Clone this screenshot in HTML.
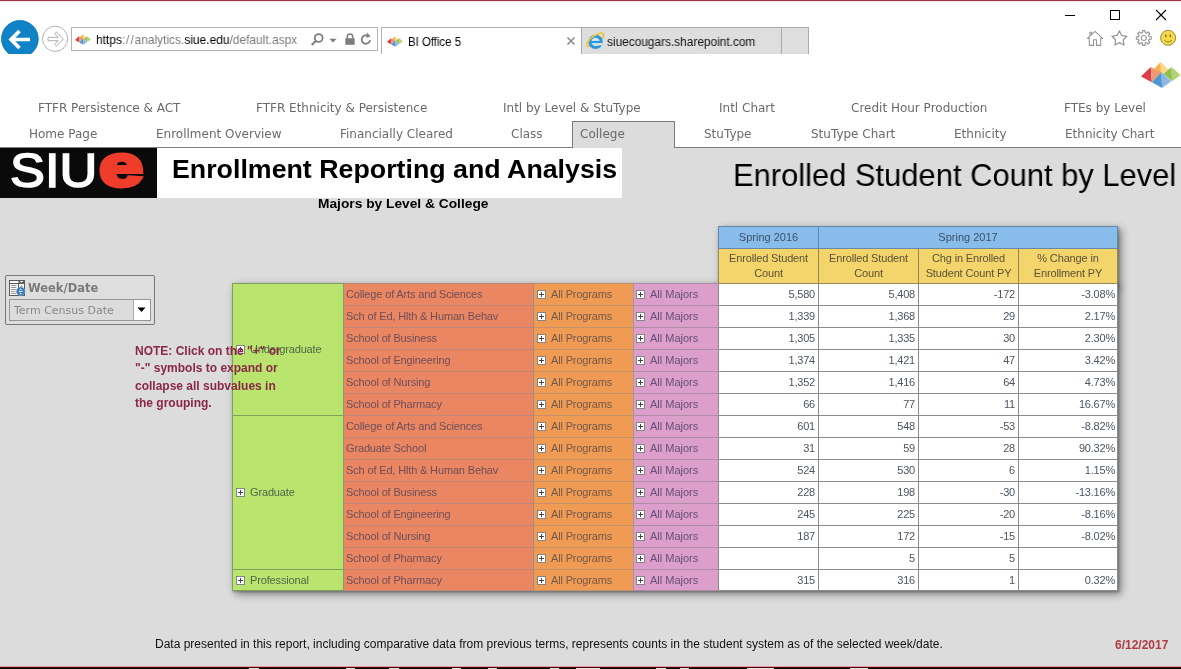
<!DOCTYPE html>
<html><head><meta charset="utf-8"><title>BI Office 5</title>
<style>
html,body{margin:0;padding:0;}
body{width:1181px;height:669px;position:relative;overflow:hidden;background:#fff;font-family:"Liberation Sans",sans-serif;}
.a{position:absolute;}
.t,.nav,.cell{will-change:transform;}
.t{position:absolute;white-space:nowrap;transform-origin:0 50%;line-height:1;}
.nav{position:absolute;white-space:nowrap;font-family:"DejaVu Sans","Liberation Sans",sans-serif;font-size:12px;color:#6a6a6a;line-height:14px;}
.r1{top:101px;} .r2{top:127px;}
#grey{left:0;top:148px;width:1181px;height:521px;background:#dcdcdc;}
.cell{position:absolute;box-sizing:border-box;font-size:11px;line-height:20px;white-space:nowrap;color:#4b5563;overflow:hidden;}
.num{text-align:right;padding-right:3px;background:#fff;letter-spacing:-.2px;}
.col{background:#ea8662;padding-left:2px;color:#6e4f59;letter-spacing:-.15px;}
.prg{background:#f09b54;color:#73594a;letter-spacing:-.15px;}
.maj{background:#dc9ecb;color:#645078;}
.maj .pl{left:2px;}
.lvl{background:#b9e46e;color:#4d6848;letter-spacing:-.15px;}
.pl{position:absolute;left:3px;top:6px;width:9px;height:9px;border:1px solid #858585;background:#fff;box-sizing:border-box;}
.pl:before{content:"";position:absolute;left:1px;top:3px;width:5px;height:1px;background:#444;}
.pl:after{content:"";position:absolute;left:3px;top:1px;width:1px;height:5px;background:#444;}
.hb{background:#88bcea;color:#3d5068;text-align:center;}
.hy{background:#f4d56b;color:#5a5238;text-align:center;line-height:15px;padding-top:2px;letter-spacing:-.15px;}
</style></head><body>
<!-- window top border -->
<div class="a" style="left:0;top:0;width:1181px;height:1px;background:#9c323b;"></div>
<div class="a" style="left:0;top:1px;width:1181px;height:1px;background:#fbe9ec;"></div>
<!-- window controls -->
<svg class="a" style="left:1060px;top:5px" width="115" height="20" viewBox="0 0 115 20">
 <path d="M5 10.5H15" stroke="#000" stroke-width="1" fill="none"/>
 <rect x="50.5" y="5.5" width="9" height="9" stroke="#000" stroke-width="1" fill="none"/>
 <path d="M96 5L106 15M106 5L96 15" stroke="#000" stroke-width="1.1" fill="none"/>
</svg>
<!-- back button -->
<div class="a" style="left:0;top:20px;width:42px;height:34px;overflow:hidden;">
 <svg width="42" height="40" viewBox="0 0 42 40">
  <circle cx="19.900" cy="18.900" r="18.600" fill="#1083c6"/>
  <circle cx="19.900" cy="18.900" r="18.200" fill="none" stroke="#0f78ba" stroke-width=".800"/>
  <path d="M30 19.5H11.5M19.5 11L11 19.5L19.5 28" stroke="#fff" stroke-width="3.6" fill="none" stroke-linecap="butt" stroke-linejoin="miter"/>
 </svg>
</div>
<!-- forward button -->
<svg class="a" style="left:41px;top:25px" width="28" height="28" viewBox="0 0 28 28">
 <circle cx="14.100" cy="13.800" r="12.600" fill="#fff" stroke="#b4b4b4" stroke-width="1"/>
 <path d="M7 12.400H17.200L13.600 8.700L15.500 7L22.200 14.050L15.500 21.100L13.600 19.400L17.200 15.700H7Z" fill="#fff" stroke="#b0b0b0" stroke-width="1" stroke-linejoin="miter"/>
</svg>
<!-- address bar -->
<div class="a" style="left:71px;top:27px;width:307px;height:24px;box-sizing:border-box;border:1px solid #b4b4b4;background:#fff;"></div>
<svg class="a" style="left:75px;top:34px" width="16" height="11" viewBox="0 0 40 26">
 <polygon points="19.700,0 10.500,9.500 20,15" fill="#fcb04a"/>
 <polygon points="19.700,0 20,15 29.500,9.500" fill="#fdd68a"/>
 <polygon points="9.700,5 0,14.500 10.900,20.200" fill="#dd3d49"/>
 <polygon points="9.700,5 10.900,20.200 20.500,10.800" fill="#ec9a72"/>
 <polygon points="30.600,5.100 22.500,12 31,19.200" fill="#8cc04f"/>
 <polygon points="30.600,5.100 31,19.200 39.500,13.300" fill="#b2d374"/>
 <polygon points="20.500,10.300 10.900,20.200 21.100,25.900" fill="#4a97d2"/>
 <polygon points="20.500,10.300 21.100,25.900 30.300,19.300" fill="#8db6e2"/>
</svg>
<div class="t" style="left:96px;top:33px;font-size:13px;color:#7c7c7c;transform:scaleX(.918);"><span style="color:#000">https</span><span style="letter-spacing:1px">://</span>analytics.<span style="color:#000">siue.edu</span>/default.aspx</div>
<!-- address icons -->
<svg class="a" style="left:309px;top:31px" width="68" height="18" viewBox="0 0 68 18">
 <circle cx="9.700" cy="7" r="3.900" fill="none" stroke="#7e7e7e" stroke-width="1.800"/>
 <path d="M7 9.800L2.700 14" stroke="#7e7e7e" stroke-width="2.100" fill="none"/>
 <path d="M20.300 7.800H27.700L24 11.500Z" fill="#7e7e7e"/>
 <rect x="36.300" y="7.200" width="9.400" height="6.600" fill="#7e7e7e"/>
 <path d="M38.300 7.500V5.700A2.700 2.700 0 0 1 43.700 5.700V7.500" fill="none" stroke="#7e7e7e" stroke-width="1.500"/>
 <path d="M59.600 5.300A4.200 4.200 0 1 0 61.100 9.100" fill="none" stroke="#7e7e7e" stroke-width="1.800"/>
 <path d="M58 1.600L61.600 5.500L57.200 6.800Z" fill="#7e7e7e"/>
</svg>
<!-- tabs -->
<div class="a" style="left:381px;top:27px;width:201px;height:27px;box-sizing:border-box;border:1px solid #b0b0b0;border-bottom:none;background:#fff;"></div>
<div class="a" style="left:581px;top:27px;width:201px;height:27px;box-sizing:border-box;border:1px solid #aaa;border-bottom:none;background:#dedede;"></div>
<div class="a" style="left:781px;top:27px;width:28px;height:27px;box-sizing:border-box;border:1px solid #aaa;border-bottom:none;background:#dedede;"></div>
<svg class="a" style="left:387px;top:36px" width="16" height="11" viewBox="0 0 40 26">
 <polygon points="19.700,0 10.500,9.500 20,15" fill="#fcb04a"/>
 <polygon points="19.700,0 20,15 29.500,9.500" fill="#fdd68a"/>
 <polygon points="9.700,5 0,14.500 10.900,20.200" fill="#dd3d49"/>
 <polygon points="9.700,5 10.900,20.200 20.500,10.800" fill="#ec9a72"/>
 <polygon points="30.600,5.100 22.500,12 31,19.200" fill="#8cc04f"/>
 <polygon points="30.600,5.100 31,19.200 39.500,13.300" fill="#b2d374"/>
 <polygon points="20.500,10.300 10.900,20.200 21.100,25.900" fill="#4a97d2"/>
 <polygon points="20.500,10.300 21.100,25.900 30.300,19.300" fill="#8db6e2"/>
</svg>
<div class="t" style="left:408px;top:36px;font-size:12px;color:#000;transform:scaleX(.95);">BI Office 5</div>
<svg class="a" style="left:566px;top:36px" width="10" height="10" viewBox="0 0 10 10"><path d="M1.500 1.500L8.500 8.500M8.500 1.500L1.500 8.500" stroke="#8a8a8a" stroke-width="1.600" fill="none"/></svg>
<!-- IE icon -->
<svg class="a" style="left:584px;top:30px" width="22" height="22" viewBox="0 0 22 22">
 <g transform="translate(11.200 9.800) rotate(-36)"><path d="M-10 0A10 3.800 0 0 0 10 0" fill="none" stroke="#f0b92e" stroke-width="1.500"/></g>
 <circle cx="11.600" cy="11.900" r="5.700" fill="#d4ecf8" stroke="#2b97dc" stroke-width="3"/>
 <rect x="7" y="10.900" width="11" height="2.200" fill="#2b97dc"/>
 <path d="M12.500 13.100H19.500V15.300L17 15.600H12.500Z" fill="#dedede"/>
 <g transform="translate(11.200 9.800) rotate(-36)"><path d="M-10 0A10 3.800 0 0 1 10 0" fill="none" stroke="#f3c437" stroke-width="1.600"/></g>
</svg>
<div class="t" style="left:607px;top:36px;font-size:12px;color:#111;transform:scaleX(.988);">siuecougars.sharepoint.com</div>
<!-- toolbar icons -->
<svg class="a" style="left:1085px;top:28px" width="96" height="20" viewBox="0 0 96 20">
 <path d="M10 3.300L2.400 10.400H4.300V17.400H8.500V11.800H11.500V17.400H15.700V10.400H17.600ZM5 7.900V4.300H6.600V6.400" fill="#fff" stroke="#989898" stroke-width="1.100" stroke-linejoin="round"/>
 <path d="M34.40 2.90L36.75 7.46L41.82 8.29L38.20 11.94L38.98 17.01L34.40 14.70L29.82 17.01L30.60 11.94L26.98 8.29L32.05 7.46Z" fill="#fff" stroke="#989898" stroke-width="1.300" stroke-linejoin="round"/>
 <path d="M57.40 4.73L57.63 2.54L59.97 2.54L60.20 4.73L61.50 5.27L63.21 3.88L64.87 5.54L63.48 7.25L64.02 8.55L66.21 8.78L66.21 11.12L64.02 11.35L63.48 12.65L64.87 14.36L63.21 16.02L61.50 14.63L60.20 15.17L59.97 17.36L57.63 17.36L57.40 15.17L56.10 14.63L54.39 16.02L52.73 14.36L54.12 12.65L53.58 11.35L51.39 11.12L51.39 8.78L53.58 8.55L54.12 7.25L52.73 5.54L54.39 3.88L56.10 5.27Z" fill="#fff" stroke="#989898" stroke-width="1.200" stroke-linejoin="round"/>
 <circle cx="58.800" cy="9.950" r="2.500" fill="#fff" stroke="#989898" stroke-width="1.100"/>
 <circle cx="83.100" cy="9.800" r="7.500" fill="#f7d94c" stroke="#9a8a3c" stroke-width="1"/>
 <ellipse cx="80.800" cy="7.800" rx=".800" ry="1.600" fill="#7d6a1c"/>
 <ellipse cx="85.300" cy="7.800" rx=".800" ry="1.600" fill="#7d6a1c"/>
 <path d="M79.400 12.300Q83.100 15.600 86.800 12.300" fill="none" stroke="#8a7424" stroke-width=".900"/>
</svg>
<!-- pyramid logo -->
<svg class="a" style="left:1141px;top:62px" width="40" height="26" viewBox="0 0 40 26">
 <polygon points="19.700,0 10.500,9.500 20,15" fill="#fcb04a"/>
 <polygon points="19.700,0 20,15 29.500,9.500" fill="#fdd68a"/>
 <polygon points="9.700,5 0,14.500 10.900,20.200" fill="#dd3d49"/>
 <polygon points="9.700,5 10.900,20.200 20.500,10.800" fill="#ec9a72"/>
 <polygon points="30.600,5.100 22.500,12 31,19.200" fill="#8cc04f"/>
 <polygon points="30.600,5.100 31,19.200 39.500,13.300" fill="#b2d374"/>
 <polygon points="20.500,10.300 10.900,20.200 21.100,25.900" fill="#4a97d2"/>
 <polygon points="20.500,10.300 21.100,25.900 30.300,19.300" fill="#8db6e2"/>
</svg>
<!-- nav -->
<div class="nav r1" style="left:38px">FTFR Persistence &amp; ACT</div>
<div class="nav r1" style="left:256px">FTFR Ethnicity &amp; Persistence</div>
<div class="nav r1" style="left:503px">Intl by Level &amp; StuType</div>
<div class="nav r1" style="left:719px">Intl Chart</div>
<div class="nav r1" style="left:851px">Credit Hour Production</div>
<div class="nav r1" style="left:1064px">FTEs by Level</div>
<div class="a" style="left:0;top:147px;width:1181px;height:1px;background:#7d7d7d;"></div>
<div class="a" id="grey"></div>
<div class="a" style="left:572px;top:121px;width:103px;height:27px;box-sizing:border-box;border:1px solid #7a7a7a;border-bottom:none;background:#dcdcdc;"></div>
<div class="nav r2" style="left:29px">Home Page</div>
<div class="nav r2" style="left:156px">Enrollment Overview</div>
<div class="nav r2" style="left:340px">Financially Cleared</div>
<div class="nav r2" style="left:511px">Class</div>
<div class="nav r2" style="left:580px">College</div>
<div class="nav r2" style="left:704px">StuType</div>
<div class="nav r2" style="left:811px">StuType Chart</div>
<div class="nav r2" style="left:954px">Ethnicity</div>
<div class="nav r2" style="left:1065px">Ethnicity Chart</div>
<!-- banner -->
<div class="a" style="left:0;top:148px;width:157px;height:50px;background:#0a0a0a;"></div>
<div class="a" style="left:157px;top:148px;width:465px;height:50px;background:#fff;"></div>
<div class="t" style="left:10px;top:147px;font-size:48px;color:#fff;transform:scaleX(1.090);-webkit-text-stroke:1.600px #fff;">SIU</div>
<div class="t" style="left:99px;top:137px;font-size:59px;font-weight:bold;color:#ee3d2a;transform:scaleX(1.350);-webkit-text-stroke:4px #ee3d2a;">e</div>
<div class="t" style="left:172px;top:156px;font-size:26.500px;font-weight:bold;color:#000;transform:scaleX(1.010);">Enrollment Reporting and Analysis</div>
<div class="t" style="left:318px;top:197px;font-size:13px;font-weight:bold;color:#000;transform:scaleX(1.058);">Majors by Level &amp; College</div>
<div class="t" style="left:733px;top:160px;font-size:31.500px;color:#000;transform:scaleX(.981);">Enrolled Student Count by Level</div>
<!-- slicer -->
<div class="a" style="left:5px;top:275px;width:150px;height:50px;box-sizing:border-box;border:1px solid #787878;border-radius:2px;background:#dedede;"></div>
<svg class="a" style="left:9px;top:280px" width="18" height="18" viewBox="0 0 18 18">
 <rect x=".5" y=".5" width="15" height="15" fill="#fff" stroke="#5a5a5a" stroke-width="1"/>
 <path d="M0 3.500H16" stroke="#5a5a5a" stroke-width="1"/>
 <rect x="9.500" y="0" width="6.500" height="3.500" fill="#5a5a5a"/>
 <path d="M10.800 1L14.400 1L12.600 2.800Z" fill="#fff"/>
 <path d="M9.500 3V12" stroke="#5a5a5a" stroke-width="1"/>
 <path d="M2 5.500H7.500M2 7.500H7.500M2 9.500H7M2 11.500H6.500M2 13.500H7" stroke="#8a8a8a" stroke-width=".900"/>
 <path d="M11.300 6.500L12.500 5L13.700 6.500Z" fill="#5a5a5a"/>
 <circle cx="11.700" cy="11.400" r="4.300" fill="#3f7dbd" stroke="#7aa7d6" stroke-width=".600"/>
 <path d="M10 11.400H13.400" stroke="#e8f3fc" stroke-width="1.100"/>
 <path d="M10.500 9.700L11.700 8.200L12.900 9.700ZM10.500 13.100L11.700 14.600L12.900 13.100Z" fill="#d9ecfa"/>
</svg>
<div class="t" style="left:28px;top:283px;font-family:'DejaVu Sans','Liberation Sans',sans-serif;font-size:11.500px;font-weight:bold;color:#7a7a7a;">Week/Date</div>
<div class="a" style="left:9px;top:299px;width:142px;height:22px;box-sizing:border-box;border:1px solid #969696;background:#dcdcdc;"></div>
<div class="a" style="left:133px;top:300px;width:17px;height:20px;background:#fff;border-left:1px solid #aaa;box-sizing:border-box;"></div>
<svg class="a" style="left:137px;top:307px" width="9" height="6" viewBox="0 0 9 6"><path d="M.5 .5H8.500L4.500 5Z" fill="#000"/></svg>
<div class="t" style="left:14px;top:305px;font-family:'DejaVu Sans','Liberation Sans',sans-serif;font-size:11px;color:#888;">Term Census Date</div>
<div class="a" style="left:232px;top:283px;width:886px;height:308px;background:#999;box-shadow:3px 3px 8px rgba(0,0,0,.45),1px 1px 2px rgba(0,0,0,.25);"></div>
<div class="a" style="left:718px;top:226px;width:400px;height:60px;background:#999;box-shadow:3px 3px 8px rgba(0,0,0,.45),1px 1px 2px rgba(0,0,0,.25);"></div>
<div class="a" style="left:232px;top:283px;width:886px;height:308px;background:#999;"></div>
<div class="cell hb" style="left:718px;top:226px;width:101px;height:23px;border-right:1px solid #6988a8;border-bottom:1px solid #6988a8;border-left:1px solid #6988a8;border-top:1px solid #6988a8;line-height:20px;">Spring 2016</div>
<div class="cell hb" style="left:819px;top:226px;width:299px;height:23px;border-right:1px solid #6988a8;border-bottom:1px solid #6988a8;border-top:1px solid #6988a8;line-height:20px;">Spring 2017</div>
<div class="cell hy" style="left:718px;top:249px;width:101px;height:35px;border-right:1px solid #94895a;border-bottom:1px solid #94895a;border-left:1px solid #94895a;">Enrolled Student<br>Count</div>
<div class="cell hy" style="left:819px;top:249px;width:100px;height:35px;border-right:1px solid #94895a;border-bottom:1px solid #94895a;">Enrolled Student<br>Count</div>
<div class="cell hy" style="left:919px;top:249px;width:100px;height:35px;border-right:1px solid #94895a;border-bottom:1px solid #94895a;">Chg in Enrolled<br>Student Count PY</div>
<div class="cell hy" style="left:1019px;top:249px;width:99px;height:35px;border-right:1px solid #94895a;border-bottom:1px solid #94895a;">% Change in<br>Enrollment PY</div>
<div class="cell lvl" style="left:232px;top:283px;width:112px;height:133px;border-right:1px solid #8a9a68;border-bottom:1px solid #82a05a;border-left:1px solid #82a05a;border-top:1px solid #82a05a;line-height:130px;padding-left:17px;"><i class="pl" style="top:61px"></i>Undergraduate</div>
<div class="cell lvl" style="left:232px;top:416px;width:112px;height:154px;border-right:1px solid #8a9a68;border-bottom:1px solid #82a05a;border-left:1px solid #82a05a;line-height:152px;padding-left:17px;"><i class="pl" style="top:72px"></i>Graduate</div>
<div class="cell lvl" style="left:232px;top:570px;width:112px;height:21px;border-right:1px solid #8a9a68;border-bottom:1px solid #82a05a;border-left:1px solid #82a05a;line-height:20px;padding-left:17px;"><i class="pl" style="top:6px"></i>Professional</div>
<div class="cell col" style="left:344px;top:283px;width:190px;height:23px;border-right:1px solid #a48c86;border-bottom:1px solid #bd8876;border-top:1px solid #bd8876;">College of Arts and Sciences</div>
<div class="cell prg" style="left:534px;top:283px;width:100px;height:23px;border-right:1px solid #a4989a;border-bottom:1px solid #c4926a;border-top:1px solid #c4926a;padding-left:17px;"><i class="pl"></i>All Programs</div>
<div class="cell maj" style="left:634px;top:283px;width:85px;height:23px;border-right:1px solid #8c8c8c;border-bottom:1px solid #ad8ca6;border-top:1px solid #ad8ca6;padding-left:16px;"><i class="pl"></i>All Majors</div>
<div class="cell num" style="left:719px;top:284px;width:100px;height:22px;border-right:1px solid #8c8c8c;border-bottom:1px solid #8c8c8c;">5,580</div>
<div class="cell num" style="left:819px;top:284px;width:100px;height:22px;border-right:1px solid #8c8c8c;border-bottom:1px solid #8c8c8c;">5,408</div>
<div class="cell num" style="left:919px;top:284px;width:100px;height:22px;border-right:1px solid #8c8c8c;border-bottom:1px solid #8c8c8c;">-172</div>
<div class="cell num" style="left:1019px;top:284px;width:99px;height:22px;border-right:1px solid #8c8c8c;border-bottom:1px solid #8c8c8c;padding-right:2px;">-3.08%</div>
<div class="cell col" style="left:344px;top:306px;width:190px;height:22px;border-right:1px solid #a48c86;border-bottom:1px solid #bd8876;">Sch of Ed, Hlth &amp; Human Behav</div>
<div class="cell prg" style="left:534px;top:306px;width:100px;height:22px;border-right:1px solid #a4989a;border-bottom:1px solid #c4926a;padding-left:17px;"><i class="pl"></i>All Programs</div>
<div class="cell maj" style="left:634px;top:306px;width:85px;height:22px;border-right:1px solid #8c8c8c;border-bottom:1px solid #ad8ca6;padding-left:16px;"><i class="pl"></i>All Majors</div>
<div class="cell num" style="left:719px;top:306px;width:100px;height:22px;border-right:1px solid #8c8c8c;border-bottom:1px solid #8c8c8c;">1,339</div>
<div class="cell num" style="left:819px;top:306px;width:100px;height:22px;border-right:1px solid #8c8c8c;border-bottom:1px solid #8c8c8c;">1,368</div>
<div class="cell num" style="left:919px;top:306px;width:100px;height:22px;border-right:1px solid #8c8c8c;border-bottom:1px solid #8c8c8c;">29</div>
<div class="cell num" style="left:1019px;top:306px;width:99px;height:22px;border-right:1px solid #8c8c8c;border-bottom:1px solid #8c8c8c;padding-right:2px;">2.17%</div>
<div class="cell col" style="left:344px;top:328px;width:190px;height:22px;border-right:1px solid #a48c86;border-bottom:1px solid #bd8876;">School of Business</div>
<div class="cell prg" style="left:534px;top:328px;width:100px;height:22px;border-right:1px solid #a4989a;border-bottom:1px solid #c4926a;padding-left:17px;"><i class="pl"></i>All Programs</div>
<div class="cell maj" style="left:634px;top:328px;width:85px;height:22px;border-right:1px solid #8c8c8c;border-bottom:1px solid #ad8ca6;padding-left:16px;"><i class="pl"></i>All Majors</div>
<div class="cell num" style="left:719px;top:328px;width:100px;height:22px;border-right:1px solid #8c8c8c;border-bottom:1px solid #8c8c8c;">1,305</div>
<div class="cell num" style="left:819px;top:328px;width:100px;height:22px;border-right:1px solid #8c8c8c;border-bottom:1px solid #8c8c8c;">1,335</div>
<div class="cell num" style="left:919px;top:328px;width:100px;height:22px;border-right:1px solid #8c8c8c;border-bottom:1px solid #8c8c8c;">30</div>
<div class="cell num" style="left:1019px;top:328px;width:99px;height:22px;border-right:1px solid #8c8c8c;border-bottom:1px solid #8c8c8c;padding-right:2px;">2.30%</div>
<div class="cell col" style="left:344px;top:350px;width:190px;height:22px;border-right:1px solid #a48c86;border-bottom:1px solid #bd8876;">School of Engineering</div>
<div class="cell prg" style="left:534px;top:350px;width:100px;height:22px;border-right:1px solid #a4989a;border-bottom:1px solid #c4926a;padding-left:17px;"><i class="pl"></i>All Programs</div>
<div class="cell maj" style="left:634px;top:350px;width:85px;height:22px;border-right:1px solid #8c8c8c;border-bottom:1px solid #ad8ca6;padding-left:16px;"><i class="pl"></i>All Majors</div>
<div class="cell num" style="left:719px;top:350px;width:100px;height:22px;border-right:1px solid #8c8c8c;border-bottom:1px solid #8c8c8c;">1,374</div>
<div class="cell num" style="left:819px;top:350px;width:100px;height:22px;border-right:1px solid #8c8c8c;border-bottom:1px solid #8c8c8c;">1,421</div>
<div class="cell num" style="left:919px;top:350px;width:100px;height:22px;border-right:1px solid #8c8c8c;border-bottom:1px solid #8c8c8c;">47</div>
<div class="cell num" style="left:1019px;top:350px;width:99px;height:22px;border-right:1px solid #8c8c8c;border-bottom:1px solid #8c8c8c;padding-right:2px;">3.42%</div>
<div class="cell col" style="left:344px;top:372px;width:190px;height:22px;border-right:1px solid #a48c86;border-bottom:1px solid #bd8876;">School of Nursing</div>
<div class="cell prg" style="left:534px;top:372px;width:100px;height:22px;border-right:1px solid #a4989a;border-bottom:1px solid #c4926a;padding-left:17px;"><i class="pl"></i>All Programs</div>
<div class="cell maj" style="left:634px;top:372px;width:85px;height:22px;border-right:1px solid #8c8c8c;border-bottom:1px solid #ad8ca6;padding-left:16px;"><i class="pl"></i>All Majors</div>
<div class="cell num" style="left:719px;top:372px;width:100px;height:22px;border-right:1px solid #8c8c8c;border-bottom:1px solid #8c8c8c;">1,352</div>
<div class="cell num" style="left:819px;top:372px;width:100px;height:22px;border-right:1px solid #8c8c8c;border-bottom:1px solid #8c8c8c;">1,416</div>
<div class="cell num" style="left:919px;top:372px;width:100px;height:22px;border-right:1px solid #8c8c8c;border-bottom:1px solid #8c8c8c;">64</div>
<div class="cell num" style="left:1019px;top:372px;width:99px;height:22px;border-right:1px solid #8c8c8c;border-bottom:1px solid #8c8c8c;padding-right:2px;">4.73%</div>
<div class="cell col" style="left:344px;top:394px;width:190px;height:22px;border-right:1px solid #a48c86;border-bottom:1px solid #bd8876;">School of Pharmacy</div>
<div class="cell prg" style="left:534px;top:394px;width:100px;height:22px;border-right:1px solid #a4989a;border-bottom:1px solid #c4926a;padding-left:17px;"><i class="pl"></i>All Programs</div>
<div class="cell maj" style="left:634px;top:394px;width:85px;height:22px;border-right:1px solid #8c8c8c;border-bottom:1px solid #ad8ca6;padding-left:16px;"><i class="pl"></i>All Majors</div>
<div class="cell num" style="left:719px;top:394px;width:100px;height:22px;border-right:1px solid #8c8c8c;border-bottom:1px solid #8c8c8c;">66</div>
<div class="cell num" style="left:819px;top:394px;width:100px;height:22px;border-right:1px solid #8c8c8c;border-bottom:1px solid #8c8c8c;">77</div>
<div class="cell num" style="left:919px;top:394px;width:100px;height:22px;border-right:1px solid #8c8c8c;border-bottom:1px solid #8c8c8c;">11</div>
<div class="cell num" style="left:1019px;top:394px;width:99px;height:22px;border-right:1px solid #8c8c8c;border-bottom:1px solid #8c8c8c;padding-right:2px;">16.67%</div>
<div class="cell col" style="left:344px;top:416px;width:190px;height:22px;border-right:1px solid #a48c86;border-bottom:1px solid #bd8876;">College of Arts and Sciences</div>
<div class="cell prg" style="left:534px;top:416px;width:100px;height:22px;border-right:1px solid #a4989a;border-bottom:1px solid #c4926a;padding-left:17px;"><i class="pl"></i>All Programs</div>
<div class="cell maj" style="left:634px;top:416px;width:85px;height:22px;border-right:1px solid #8c8c8c;border-bottom:1px solid #ad8ca6;padding-left:16px;"><i class="pl"></i>All Majors</div>
<div class="cell num" style="left:719px;top:416px;width:100px;height:22px;border-right:1px solid #8c8c8c;border-bottom:1px solid #8c8c8c;">601</div>
<div class="cell num" style="left:819px;top:416px;width:100px;height:22px;border-right:1px solid #8c8c8c;border-bottom:1px solid #8c8c8c;">548</div>
<div class="cell num" style="left:919px;top:416px;width:100px;height:22px;border-right:1px solid #8c8c8c;border-bottom:1px solid #8c8c8c;">-53</div>
<div class="cell num" style="left:1019px;top:416px;width:99px;height:22px;border-right:1px solid #8c8c8c;border-bottom:1px solid #8c8c8c;padding-right:2px;">-8.82%</div>
<div class="cell col" style="left:344px;top:438px;width:190px;height:22px;border-right:1px solid #a48c86;border-bottom:1px solid #bd8876;">Graduate School</div>
<div class="cell prg" style="left:534px;top:438px;width:100px;height:22px;border-right:1px solid #a4989a;border-bottom:1px solid #c4926a;padding-left:17px;"><i class="pl"></i>All Programs</div>
<div class="cell maj" style="left:634px;top:438px;width:85px;height:22px;border-right:1px solid #8c8c8c;border-bottom:1px solid #ad8ca6;padding-left:16px;"><i class="pl"></i>All Majors</div>
<div class="cell num" style="left:719px;top:438px;width:100px;height:22px;border-right:1px solid #8c8c8c;border-bottom:1px solid #8c8c8c;">31</div>
<div class="cell num" style="left:819px;top:438px;width:100px;height:22px;border-right:1px solid #8c8c8c;border-bottom:1px solid #8c8c8c;">59</div>
<div class="cell num" style="left:919px;top:438px;width:100px;height:22px;border-right:1px solid #8c8c8c;border-bottom:1px solid #8c8c8c;">28</div>
<div class="cell num" style="left:1019px;top:438px;width:99px;height:22px;border-right:1px solid #8c8c8c;border-bottom:1px solid #8c8c8c;padding-right:2px;">90.32%</div>
<div class="cell col" style="left:344px;top:460px;width:190px;height:22px;border-right:1px solid #a48c86;border-bottom:1px solid #bd8876;">Sch of Ed, Hlth &amp; Human Behav</div>
<div class="cell prg" style="left:534px;top:460px;width:100px;height:22px;border-right:1px solid #a4989a;border-bottom:1px solid #c4926a;padding-left:17px;"><i class="pl"></i>All Programs</div>
<div class="cell maj" style="left:634px;top:460px;width:85px;height:22px;border-right:1px solid #8c8c8c;border-bottom:1px solid #ad8ca6;padding-left:16px;"><i class="pl"></i>All Majors</div>
<div class="cell num" style="left:719px;top:460px;width:100px;height:22px;border-right:1px solid #8c8c8c;border-bottom:1px solid #8c8c8c;">524</div>
<div class="cell num" style="left:819px;top:460px;width:100px;height:22px;border-right:1px solid #8c8c8c;border-bottom:1px solid #8c8c8c;">530</div>
<div class="cell num" style="left:919px;top:460px;width:100px;height:22px;border-right:1px solid #8c8c8c;border-bottom:1px solid #8c8c8c;">6</div>
<div class="cell num" style="left:1019px;top:460px;width:99px;height:22px;border-right:1px solid #8c8c8c;border-bottom:1px solid #8c8c8c;padding-right:2px;">1.15%</div>
<div class="cell col" style="left:344px;top:482px;width:190px;height:22px;border-right:1px solid #a48c86;border-bottom:1px solid #bd8876;">School of Business</div>
<div class="cell prg" style="left:534px;top:482px;width:100px;height:22px;border-right:1px solid #a4989a;border-bottom:1px solid #c4926a;padding-left:17px;"><i class="pl"></i>All Programs</div>
<div class="cell maj" style="left:634px;top:482px;width:85px;height:22px;border-right:1px solid #8c8c8c;border-bottom:1px solid #ad8ca6;padding-left:16px;"><i class="pl"></i>All Majors</div>
<div class="cell num" style="left:719px;top:482px;width:100px;height:22px;border-right:1px solid #8c8c8c;border-bottom:1px solid #8c8c8c;">228</div>
<div class="cell num" style="left:819px;top:482px;width:100px;height:22px;border-right:1px solid #8c8c8c;border-bottom:1px solid #8c8c8c;">198</div>
<div class="cell num" style="left:919px;top:482px;width:100px;height:22px;border-right:1px solid #8c8c8c;border-bottom:1px solid #8c8c8c;">-30</div>
<div class="cell num" style="left:1019px;top:482px;width:99px;height:22px;border-right:1px solid #8c8c8c;border-bottom:1px solid #8c8c8c;padding-right:2px;">-13.16%</div>
<div class="cell col" style="left:344px;top:504px;width:190px;height:22px;border-right:1px solid #a48c86;border-bottom:1px solid #bd8876;">School of Engineering</div>
<div class="cell prg" style="left:534px;top:504px;width:100px;height:22px;border-right:1px solid #a4989a;border-bottom:1px solid #c4926a;padding-left:17px;"><i class="pl"></i>All Programs</div>
<div class="cell maj" style="left:634px;top:504px;width:85px;height:22px;border-right:1px solid #8c8c8c;border-bottom:1px solid #ad8ca6;padding-left:16px;"><i class="pl"></i>All Majors</div>
<div class="cell num" style="left:719px;top:504px;width:100px;height:22px;border-right:1px solid #8c8c8c;border-bottom:1px solid #8c8c8c;">245</div>
<div class="cell num" style="left:819px;top:504px;width:100px;height:22px;border-right:1px solid #8c8c8c;border-bottom:1px solid #8c8c8c;">225</div>
<div class="cell num" style="left:919px;top:504px;width:100px;height:22px;border-right:1px solid #8c8c8c;border-bottom:1px solid #8c8c8c;">-20</div>
<div class="cell num" style="left:1019px;top:504px;width:99px;height:22px;border-right:1px solid #8c8c8c;border-bottom:1px solid #8c8c8c;padding-right:2px;">-8.16%</div>
<div class="cell col" style="left:344px;top:526px;width:190px;height:22px;border-right:1px solid #a48c86;border-bottom:1px solid #bd8876;">School of Nursing</div>
<div class="cell prg" style="left:534px;top:526px;width:100px;height:22px;border-right:1px solid #a4989a;border-bottom:1px solid #c4926a;padding-left:17px;"><i class="pl"></i>All Programs</div>
<div class="cell maj" style="left:634px;top:526px;width:85px;height:22px;border-right:1px solid #8c8c8c;border-bottom:1px solid #ad8ca6;padding-left:16px;"><i class="pl"></i>All Majors</div>
<div class="cell num" style="left:719px;top:526px;width:100px;height:22px;border-right:1px solid #8c8c8c;border-bottom:1px solid #8c8c8c;">187</div>
<div class="cell num" style="left:819px;top:526px;width:100px;height:22px;border-right:1px solid #8c8c8c;border-bottom:1px solid #8c8c8c;">172</div>
<div class="cell num" style="left:919px;top:526px;width:100px;height:22px;border-right:1px solid #8c8c8c;border-bottom:1px solid #8c8c8c;">-15</div>
<div class="cell num" style="left:1019px;top:526px;width:99px;height:22px;border-right:1px solid #8c8c8c;border-bottom:1px solid #8c8c8c;padding-right:2px;">-8.02%</div>
<div class="cell col" style="left:344px;top:548px;width:190px;height:22px;border-right:1px solid #a48c86;border-bottom:1px solid #bd8876;">School of Pharmacy</div>
<div class="cell prg" style="left:534px;top:548px;width:100px;height:22px;border-right:1px solid #a4989a;border-bottom:1px solid #c4926a;padding-left:17px;"><i class="pl"></i>All Programs</div>
<div class="cell maj" style="left:634px;top:548px;width:85px;height:22px;border-right:1px solid #8c8c8c;border-bottom:1px solid #ad8ca6;padding-left:16px;"><i class="pl"></i>All Majors</div>
<div class="cell num" style="left:719px;top:548px;width:100px;height:22px;border-right:1px solid #8c8c8c;border-bottom:1px solid #8c8c8c;"></div>
<div class="cell num" style="left:819px;top:548px;width:100px;height:22px;border-right:1px solid #8c8c8c;border-bottom:1px solid #8c8c8c;">5</div>
<div class="cell num" style="left:919px;top:548px;width:100px;height:22px;border-right:1px solid #8c8c8c;border-bottom:1px solid #8c8c8c;">5</div>
<div class="cell num" style="left:1019px;top:548px;width:99px;height:22px;border-right:1px solid #8c8c8c;border-bottom:1px solid #8c8c8c;padding-right:2px;"></div>
<div class="cell col" style="left:344px;top:570px;width:190px;height:21px;border-right:1px solid #a48c86;border-bottom:1px solid #bd8876;">School of Pharmacy</div>
<div class="cell prg" style="left:534px;top:570px;width:100px;height:21px;border-right:1px solid #a4989a;border-bottom:1px solid #c4926a;padding-left:17px;"><i class="pl"></i>All Programs</div>
<div class="cell maj" style="left:634px;top:570px;width:85px;height:21px;border-right:1px solid #8c8c8c;border-bottom:1px solid #ad8ca6;padding-left:16px;"><i class="pl"></i>All Majors</div>
<div class="cell num" style="left:719px;top:570px;width:100px;height:21px;border-right:1px solid #8c8c8c;border-bottom:1px solid #8c8c8c;">315</div>
<div class="cell num" style="left:819px;top:570px;width:100px;height:21px;border-right:1px solid #8c8c8c;border-bottom:1px solid #8c8c8c;">316</div>
<div class="cell num" style="left:919px;top:570px;width:100px;height:21px;border-right:1px solid #8c8c8c;border-bottom:1px solid #8c8c8c;">1</div>
<div class="cell num" style="left:1019px;top:570px;width:99px;height:21px;border-right:1px solid #8c8c8c;border-bottom:1px solid #8c8c8c;padding-right:2px;">0.32%</div><!-- note -->
<div class="t" style="left:135px;top:342.600px;font-size:12px;font-weight:bold;color:#8a2747;line-height:17.400px;white-space:pre;">NOTE: Click on the "+" or
"-" symbols to expand or
collapse all subvalues in
the grouping.</div>
<!-- footer -->
<div class="t" style="left:155px;top:638px;font-size:12px;color:#111;">Data presented in this report, including comparative data from previous terms, represents counts in the student system as of the selected week/date.</div>
<div class="t" style="left:1115px;top:639px;font-size:12px;font-weight:bold;color:#b23b42;">6/12/2017</div>
<div class="a" style="left:0;top:666px;width:1181px;height:1px;background:#ee929c;"></div>
<div class="a" style="left:0;top:667px;width:1181px;height:2px;background:#000;border-top:1px solid #3a0a10;box-sizing:border-box;"></div>
<div class="a" style="left:249px;top:668px;width:10px;height:1px;background:#e8dcdc;"></div><div class="a" style="left:346px;top:668px;width:9px;height:1px;background:#e8dcdc;"></div><div class="a" style="left:389px;top:668px;width:10px;height:1px;background:#e8dcdc;"></div><div class="a" style="left:452px;top:668px;width:9px;height:1px;background:#e8dcdc;"></div><div class="a" style="left:488px;top:668px;width:9px;height:1px;background:#e8dcdc;"></div><div class="a" style="left:550px;top:668px;width:9px;height:1px;background:#e8dcdc;"></div><div class="a" style="left:576px;top:668px;width:24px;height:1px;background:#e8dcdc;"></div><div class="a" style="left:656px;top:668px;width:10px;height:1px;background:#e8dcdc;"></div><div class="a" style="left:680px;top:668px;width:9px;height:1px;background:#e8dcdc;"></div><div class="a" style="left:747px;top:668px;width:27px;height:1px;background:#e8dcdc;"></div><div class="a" style="left:850px;top:668px;width:18px;height:1px;background:#e8dcdc;"></div>
</body></html>
